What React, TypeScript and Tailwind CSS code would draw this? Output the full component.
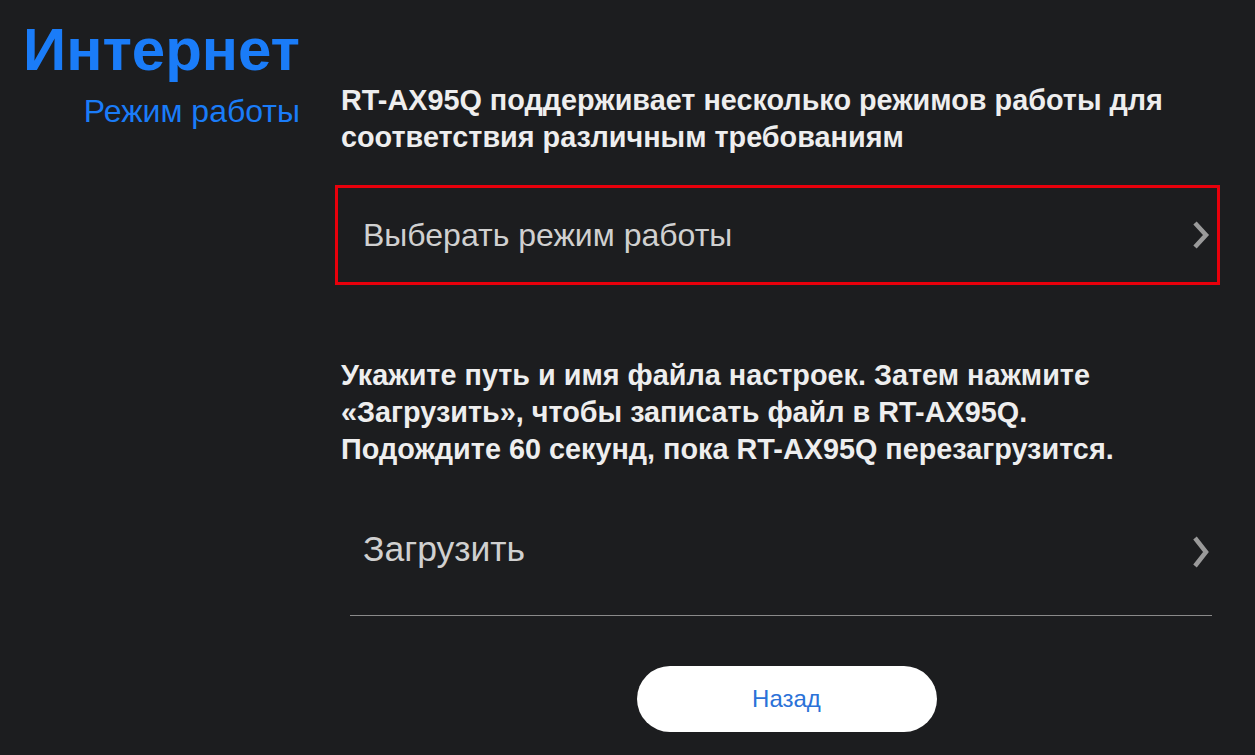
function Chevron({ h }: { h: number }) {
    return (
        <svg width="20" height={h} viewBox={`0 0 20 ${h}`} className="text-[#9a9a9a]">
            <path d={`M4 3 L15 ${h / 2} L4 ${h - 3}`} fill="none" stroke="currentColor" strokeWidth="4.5" />
        </svg>
    );
}

export default function App() {
    return (
        <div className="min-h-screen w-full bg-[#1c1d1f] font-['Liberation_Sans',Arial,sans-serif] flex">
            <div className="w-[300px] text-right text-[#1a7cf8] pt-[20px]">
                <h1 className="text-[60px] font-bold leading-[60px]">Интернет</h1>
                <p className="text-[32px] leading-[36px] mt-[13px]">Режим работы</p>
            </div>
            <div className="ml-[35px] w-[885px] pt-[82px]">
                <p className="pl-[6px] text-[28.8px] font-bold leading-[37px] text-[#eeeeee]">
                    RT-AX95Q поддерживает несколько режимов работы для соответствия различным требованиям
                </p>
                <div className="mt-[29px] flex items-center justify-between h-[100px] border-[3px] border-[#e8000b] pl-[25px] pr-[6px]">
                    <span className="text-[32px] text-[#d0d0d0]">Выберать режим работы</span>
                    <Chevron h={30} />
                </div>
                <p className="pl-[6px] mt-[72px] text-[28.8px] font-bold leading-[37px] text-[#eeeeee]">
                    Укажите путь и имя файла настроек. Затем нажмите «Загрузить», чтобы записать файл в RT-AX95Q.
                    <br />
                    Подождите 60 секунд, пока RT-AX95Q перезагрузится.
                </p>
                <div className="mt-[37px] ml-[15px] w-[862px] h-[111px] border-b border-[#8a8a8a] flex items-start justify-between pt-[24px] pl-[13px] pr-[1px]">
                    <span className="text-[35.5px] leading-[40px] text-[#d0d0d0]">Загрузить</span>
                    <div className="pt-[6px]">
                        <Chevron h={34} />
                    </div>
                </div>
                <div className="flex justify-center mt-[50px] pl-[18px]">
                    <button className="w-[300px] h-[66px] rounded-full bg-white text-[#2b72d8] text-[24px]">
                        Назад
                    </button>
                </div>
            </div>
        </div>
    );
}
